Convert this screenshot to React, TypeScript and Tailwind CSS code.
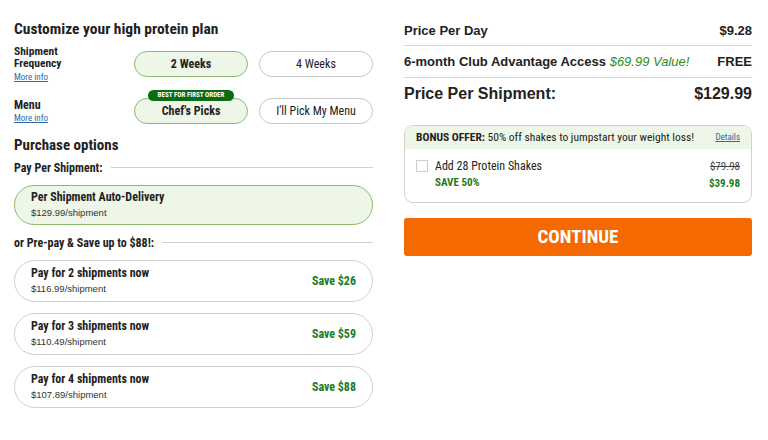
import React, { useState } from "react";

const display = "font-['Roboto_Condensed','DejaVu_Sans_Condensed',sans-serif]";
const body = "font-['Liberation_Sans',Arial,sans-serif]";

interface Plan {
  count: number;
  price: string;
  save: string;
}

const plans: Plan[] = [
  { count: 2, price: "$116.99", save: "$26" },
  { count: 3, price: "$110.49", save: "$59" },
  { count: 4, price: "$107.89", save: "$88" },
];

const Divider = ({ label }: { label: string }) => (
  <div className="flex items-center gap-2 h-[15px]">
    <span className={`${display} font-bold text-[12px] text-[#222]`}>{label}</span>
    <div className="flex-1 h-px bg-[#d0d0d0]" />
  </div>
);

const App = () => {
  const [shakes, setShakes] = useState(false);

  return (
    <div className={`w-[768px] h-[440px] bg-white flex gap-[31px] px-[14px] pt-[18px] ${body}`}>
      {/* Left column */}
      <div className="w-[359px] flex flex-col">
        <h1 className={`${display} font-bold text-[15.5px] text-[#222] leading-[22px]`}>
          Customize your high protein plan
        </h1>

        <div className="flex items-center mt-[5px] h-[37px]">
          <div className="w-[120px]">
            <div className={`${display} font-bold text-[11.5px] leading-[12px] text-[#222]`}>Shipment</div>
            <div className={`${display} font-bold text-[11.5px] leading-[12px] text-[#222]`}>Frequency</div>
            <a className={`${display} block mt-[3px] text-[9px] leading-[10px] text-[#2a6aa8] underline`}>
              More info
            </a>
          </div>
          <div className="flex gap-[11px] flex-1">
            <button className={`${display} w-[114px] h-[26px] rounded-full bg-[#eef6e7] border border-[#8dbb6d] font-bold text-[12px] text-[#222]`}>
              2 Weeks
            </button>
            <button className={`${display} w-[114px] h-[26px] rounded-full bg-white border border-[#c8c8c8] text-[12px] text-[#222]`}>
              4 Weeks
            </button>
          </div>
        </div>

        <div className="flex items-center mt-[16px] h-[26px]">
          <div className="w-[120px]">
            <div className={`${display} font-bold text-[12px] leading-[12px] text-[#222]`}>Menu</div>
            <a className={`${display} block mt-[2px] text-[9px] leading-[10px] text-[#2a6aa8] underline`}>
              More info
            </a>
          </div>
          <div className="flex gap-[11px] flex-1">
            <div className="relative">
              <span className={`${display} absolute -top-[8px] left-[14px] w-[86px] h-[11px] rounded-full bg-[#0b6b12] text-white text-[7px] font-bold leading-[11px] text-center`}>
                BEST FOR FIRST ORDER
              </span>
              <button className={`${display} w-[114px] h-[26px] rounded-full bg-[#eef6e7] border border-[#8dbb6d] font-bold text-[12px] text-[#222]`}>
                Chef's Picks
              </button>
            </div>
            <button className={`${display} w-[114px] h-[26px] rounded-full bg-white border border-[#c8c8c8] text-[12px] text-[#222]`}>
              I'll Pick My Menu
            </button>
          </div>
        </div>

        <h2 className={`${display} font-bold text-[15px] text-[#222] mt-[11px] leading-[20px]`}>
          Purchase options
        </h2>

        <div className="mt-[5px]">
          <Divider label="Pay Per Shipment:" />
        </div>

        <div className="mt-[10px] h-[40px] rounded-full bg-[#eef6e7] border border-[#8dbb6d] flex flex-col justify-center pl-[16px]">
          <div className={`${display} font-bold text-[12px] text-[#222] leading-[15px]`}>
            Per Shipment Auto-Delivery
          </div>
          <div className="text-[9.5px] text-[#333] leading-[15px]">$129.99/shipment</div>
        </div>

        <div className="mt-[10px]">
          <Divider label="or Pre-pay & Save up to $88!:" />
        </div>

        <div className="flex flex-col gap-[11px] mt-[10px]">
          {plans.map((plan) => (
            <div
              key={plan.count}
              className="h-[42px] rounded-full border border-[#d0d0d0] flex items-center justify-between pl-[16px] pr-[16px]"
            >
              <div>
                <div className={`${display} font-bold text-[12px] text-[#222] leading-[15px]`}>
                  Pay for {plan.count} shipments now
                </div>
                <div className="text-[9.5px] text-[#333] leading-[16px]">{plan.price}/shipment</div>
              </div>
              <div className={`${display} font-bold text-[12px] text-[#1c7a1c]`}>Save {plan.save}</div>
            </div>
          ))}
        </div>
      </div>

      {/* Right column */}
      <div className="w-[348px] flex flex-col">
        <div className="flex justify-between items-center h-[28px] border-b border-[#d8d8d8] text-[13px] font-bold text-[#222] pb-[2px]">
          <span>Price Per Day</span>
          <span>$9.28</span>
        </div>
        <div className="flex justify-between items-center h-[32px] border-b border-[#d8d8d8] text-[13px] font-bold text-[#222]">
          <span>
            6-month Club Advantage Access{" "}
            <span className="italic font-normal text-[#2f8a1e]">$69.99 Value!</span>
          </span>
          <span>FREE</span>
        </div>
        <div className="flex justify-between items-center h-[32px] text-[16px] font-bold text-[#222]">
          <span>Price Per Shipment:</span>
          <span>$129.99</span>
        </div>

        <div className="mt-[15px] h-[78px] rounded-[9px] border border-[#d0d0d0] overflow-hidden">
          <div className="h-[23px] bg-[#eef6e7] flex items-center justify-between px-[11px]">
            <span className={`${display} text-[11.5px] text-[#222]`}>
              <b>BONUS OFFER:</b> 50% off shakes to jumpstart your weight loss!
            </span>
            <a className={`${display} text-[9px] text-[#2a6aa8] underline`}>Details</a>
          </div>
          <div className="flex items-start px-[11px] pt-[10px]">
            <button
              onClick={() => setShakes(!shakes)}
              className="w-[12px] h-[12px] border border-[#ccc] bg-white mt-[1px]"
            />
            <div className={`${display} ml-[7px] flex-1`}>
              <div className="text-[12px] text-[#222] leading-[15px]">Add 28 Protein Shakes</div>
              <div className="text-[11px] font-bold text-[#1c7a1c] leading-[17px]">SAVE 50%</div>
            </div>
            <div className={`${display} text-right`}>
              <div className="text-[11px] text-[#444] line-through leading-[16px]">$79.98</div>
              <div className="text-[11px] font-bold text-[#1c7a1c] leading-[17px]">$39.98</div>
            </div>
          </div>
        </div>

        <button className={`${display} mt-[15px] h-[38px] rounded-[3px] bg-[#f56a00] text-white font-bold text-[19px]`}>
          CONTINUE
        </button>
      </div>
    </div>
  );
};

export default App;
